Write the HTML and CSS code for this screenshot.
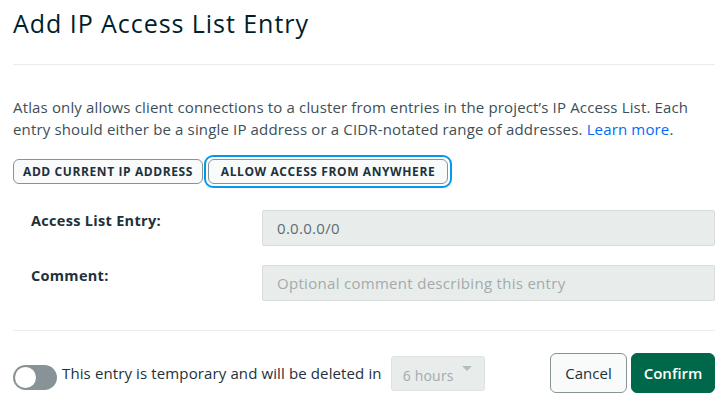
FILE: index.html
```html
<!DOCTYPE html>
<html>
<head>
<meta charset="utf-8">
<link rel="stylesheet" href="styles.css">
</head>
<body>
<div class="modal">
  <h1 class="title">Add IP Access List Entry</h1>
  <hr class="divider top">
  <p class="desc">Atlas only allows client connections to a cluster from entries in the project’s IP Access List. Each entry should either be a single IP address or a CIDR-notated range of addresses. <a class="link" href="#">Learn more</a>.</p>
  <div class="actions">
    <button class="pill">ADD CURRENT IP ADDRESS</button>
    <span class="focus-ring"><button class="pill">ALLOW ACCESS FROM ANYWHERE</button></span>
  </div>
  <div class="form">
    <div class="row">
      <label class="label">Access List Entry:</label>
      <div class="input">0.0.0.0/0</div>
    </div>
    <div class="row">
      <label class="label">Comment:</label>
      <div class="input placeholder">Optional comment describing this entry</div>
    </div>
  </div>
  <hr class="divider bottom">
  <div class="footer">
    <div class="temp">
      <span class="toggle"><span class="knob"></span></span>
      <span class="temp-text">This entry is temporary and will be deleted in</span>
      <div class="select"><span>6 hours</span><span class="caret"></span></div>
    </div>
    <div class="buttons">
      <button class="btn cancel">Cancel</button>
      <button class="btn confirm">Confirm</button>
    </div>
  </div>
</div>
</body>
</html>
```
FILE: styles.css
```css
* { box-sizing: border-box; }
html, body { margin: 0; padding: 0; background: #fff; }
body { font-family: "Open Sans", Lato, sans-serif; color: #3d4f58; }
.modal { padding: 0 6px 0 13px; width: 721px; }
.title {
  margin: 0;
  padding-top: 7px;
  font-size: 25px;
  font-weight: 400;
  color: #001e2b;
  line-height: 33px;
  letter-spacing: 0.95px;
}
.divider { border: 0; border-top: 1px solid #e8edeb; margin: 0; }
.divider.top { margin-top: 24px; }
.desc {
  margin: 31px 0 0;
  font-size: 15px;
  line-height: 22px;
  color: #3d4f58;
  letter-spacing: 0.15px;
}
.link { color: #016bf8; text-decoration: none; }
.actions { display: flex; align-items: center; gap: 0; margin-top: 15px; }
.pill {
  font-family: "Open Sans", sans-serif;
  font-weight: 700;
  font-size: 12px;
  letter-spacing: 0.6px;
  color: #21313c;
  background: #f9fbfa;
  border: 1px solid #889397;
  border-radius: 6px;
  height: 25px;
  padding: 0 4px;
  margin: 0;
  white-space: nowrap;
}
.actions > .pill { width: 190px; }
.focus-ring {
  display: inline-flex;
  margin-left: 1px;
  padding: 2px;
  border: 2px solid #0498ec;
  border-radius: 9px;
}
.focus-ring .pill { width: 240px; }
.form { padding: 22px 0 0 18px; display: flex; flex-direction: column; gap: 19px; }
.row { display: flex; align-items: flex-start; }
.label {
  width: 231px;
  font-size: 14.5px;
  font-weight: 700;
  color: #21313c;
  padding-top: 1px;
  letter-spacing: 0.3px;
}
.input {
  flex: 1;
  height: 36px;
  background: #e8edeb;
  border: 1px solid #d8dddb;
  border-radius: 2px;
  padding: 0 14px;
  font-size: 15px;
  line-height: 34px;
  color: #5c6c75;
  letter-spacing: 0.3px;
}
.input.placeholder { color: #a3aaad; }
.divider.bottom { margin-top: 29px; }
.footer { display: flex; justify-content: space-between; align-items: center; margin-top: 22px; }
.temp { display: flex; align-items: center; }
.toggle {
  width: 44px; height: 25px; border-radius: 13px;
  background: #889397; position: relative; display: inline-block;
  margin-top: 8px;
}
.knob {
  position: absolute; left: 2px; top: 2px; width: 21px; height: 21px;
  border-radius: 50%; background: #fff;
}
.temp-text { font-size: 15px; color: #21313c; margin-left: 5px; letter-spacing: 0.12px; }
.select {
  margin-left: 9px;
  width: 94px; height: 35px;
  background: #e8edeb;
  border: 1px solid #dde3e1;
  border-radius: 3px;
  display: flex; align-items: center; justify-content: space-between;
  padding: 0 12px 0 11px;
  font-size: 14px;
  color: #a3aaad;
  letter-spacing: 0.2px;
}
.select span:first-child { padding-top: 4px; }
.caret {
  width: 0; height: 0;
  border-left: 5px solid transparent; border-right: 5px solid transparent;
  border-top: 5px solid #b6bdbf;
  margin-bottom: 10px;
}
.buttons { display: flex; gap: 4px; }
.btn {
  height: 40px;
  border-radius: 6px;
  font-family: "Open Sans", sans-serif;
  font-size: 15px;
  padding: 0;
}
.cancel { width: 77px; background: #f9fbfa; border: 1px solid #889397; color: #21313c; }
.confirm { width: 84px; background: #00684a; border: 1px solid #00684a; color: #fff; font-weight: 600; }
```
